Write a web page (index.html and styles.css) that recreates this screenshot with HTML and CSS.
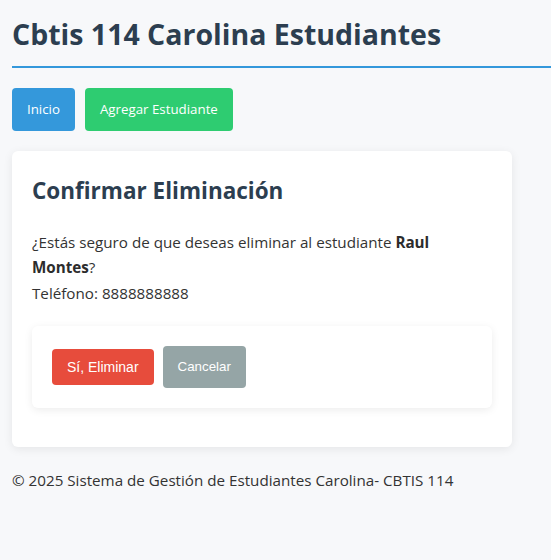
FILE: index.html
```html
<!DOCTYPE html>
<html lang="es">
<head>
<meta charset="utf-8">
<title>Confirmar Eliminación</title>
<link rel="stylesheet" href="styles.css">
</head>
<body>
<header class="site-header">
  <h1 class="site-title">Cbtis 114 Carolina Estudiantes</h1>
</header>
<nav class="nav">
  <a class="btn btn-blue" href="#">Inicio</a>
  <a class="btn btn-green" href="#">Agregar Estudiante</a>
</nav>
<main class="card">
  <h2 class="card-title">Confirmar Eliminación</h2>
  <p class="card-text">¿Estás seguro de que deseas eliminar al estudiante <strong>Raul Montes</strong>?<br>Teléfono: 8888888888</p>
  <form class="confirm-box">
    <button type="button" class="btn-delete">Sí, Eliminar</button>
    <button type="button" class="btn-cancel">Cancelar</button>
  </form>
</main>
<footer class="footer">© 2025 Sistema de Gestión de Estudiantes Carolina- CBTIS 114</footer>
</body>
</html>
```
FILE: styles.css
```css
html, body {
  margin: 0;
}
body {
  padding: 12px 0 12px 12px;
  background: #f7f8fa;
  font-family: "Open Sans", "Noto Sans", sans-serif;
  font-size: 15.2px;
  line-height: 25.5px;
  color: #333;
}
.site-header {
  border-bottom: 2px solid #3498db;
  padding-bottom: 10px;
}
.site-title {
  margin: 0;
  font-size: 28.5px;
  line-height: 44px;
  font-weight: 700;
  color: #2c3e50;
}
.nav {
  display: flex;
  gap: 10px;
  margin-top: 20px;
}
.btn {
  display: inline-block;
  padding: 10px 15px;
  font-size: 13.3px;
  line-height: 23px;
  color: #fff;
  text-decoration: none;
  border-radius: 4px;
}
.btn-blue { background: #3498db; }
.btn-green { background: #2ecc71; }
.card {
  display: block;
  width: 460px;
  margin-top: 20px;
  padding: 20px;
  background: #fff;
  border-radius: 6px;
  box-shadow: 0 2px 10px rgba(0, 0, 0, 0.08);
}
.card-title {
  margin: 0 0 18px;
  font-size: 22.5px;
  line-height: 40.5px;
  color: #2c3e50;
}
.card-text {
  max-width: 420px;
  margin: 0 0 20px;
}
.card-text strong {
  color: #2c2c2c;
}
.confirm-box {
  display: flex;
  align-items: center;
  gap: 9px;
  padding: 20px;
  margin-bottom: 19px;
  background: #fff;
  border-radius: 6px;
  box-shadow: 0 2px 8px rgba(0, 0, 0, 0.08);
}
.btn-delete,
.btn-cancel {
  border: none;
  border-radius: 4px;
  color: #fff;
  font-family: "Liberation Sans", Arial, sans-serif;
  line-height: 16px;
}
.btn-delete {
  background: #e74c3c;
  font-size: 14px;
  padding: 10px 15px;
}
.btn-cancel {
  background: #95a5a6;
  font-size: 13.33px;
  padding: 13px 15px;
}
.footer {
  margin-top: 21px;
}
```
